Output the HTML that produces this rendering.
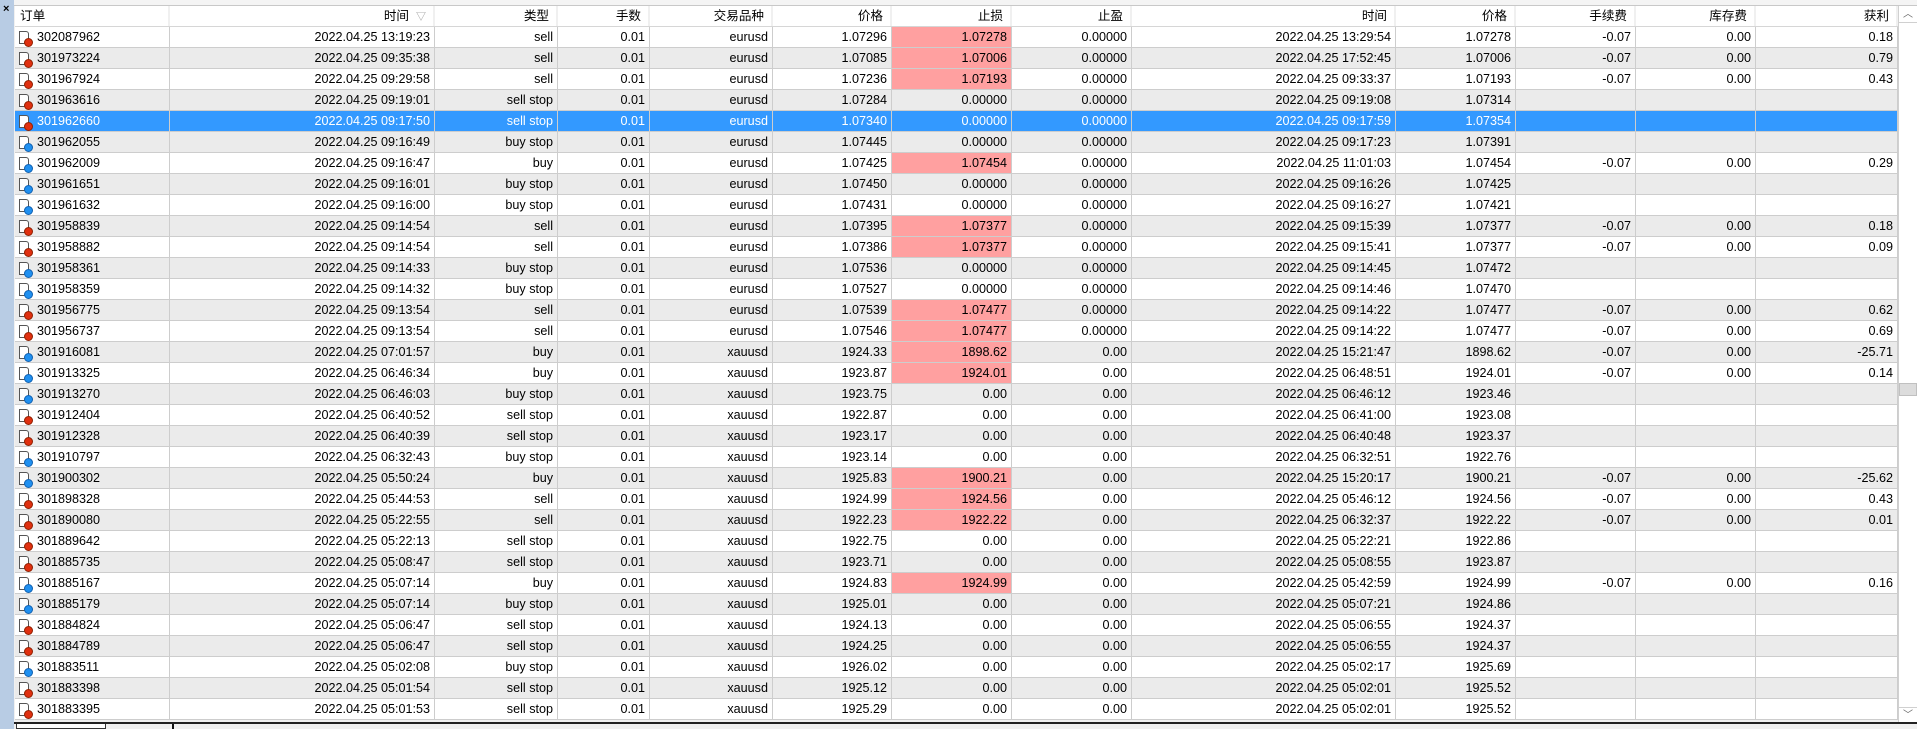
<!DOCTYPE html>
<html><head><meta charset="utf-8"><style>
*{margin:0;padding:0;box-sizing:border-box}
body{width:1917px;height:729px;overflow:hidden;background:#f0f0f0;font-family:"Liberation Sans","Noto Sans CJK SC",sans-serif;font-size:12.6px;color:#000;position:relative}
#strip{position:absolute;left:0;top:0;width:14px;height:729px;background:#b8cce4}
#x{position:absolute;left:3px;top:4px;font-size:11px;font-weight:bold;line-height:10px}
#topbar{position:absolute;left:14px;top:0;width:1903px;height:6px;background:#f4f4f4;border-bottom:1px solid #c8c8c8}
#hdr{position:absolute;left:15px;top:6px;height:21px;display:flex;background:#fff;border-bottom:1px solid #d6d6d6}
#hdr div{height:20px;line-height:20px;text-align:right;padding-right:7px;border-right:2px solid #f0f0f0;background:#fff}
#hdr div:first-child{text-align:left;padding-left:5px}
#rows{position:absolute;left:15px;top:27px}
.r{display:flex;height:21px;background:#fff}
.r:nth-child(even){background:#ebebeb}
.r>div{height:21px;line-height:20px;border-right:1px solid #cdcdcd;border-bottom:1px solid #cdcdcd;text-align:right;padding-right:4px;white-space:nowrap;overflow:hidden}
.r>div:first-child{text-align:left;padding-left:22px;position:relative}
.r.sel{background:#3399ff!important;color:#fff}
.sl{background:#ffa0a0}
.ic{position:absolute;left:4px;top:4px;width:10px;height:13px;border:1px solid #555;background:#fff;border-radius:0 3px 0 0}
.ic::after{content:"";position:absolute;left:4px;top:6px;width:7px;height:7px;border-radius:50%;background:#e03010;border:1px solid #902000}
.ic.b::after{background:#2090f0;border-color:#1060b0}
.c0{width:155px}.c1{width:265px}.c2{width:123px}.c3{width:92px}.c4{width:123px}.c5{width:119px}.c6{width:120px}.c7{width:120px}.c8{width:264px}.c9{width:120px}.c10{width:120px}.c11{width:120px}.c12{width:142px}
#sb{position:absolute;left:1898px;top:6px;width:19px;height:717px;background:#fff;border-left:1px solid #d0d0d0}
#up,#dn{position:absolute;left:0;width:18px;height:16px;font-size:10px;color:#666;text-align:center;line-height:16px}
#up{top:1px;border-bottom:1px solid #d0d0d0}
#dn{bottom:0;border-top:1px solid #d0d0d0}
#th{position:absolute;left:0;top:377px;width:18px;height:13px;background:#dcdcdc;border:1px solid #c0c0c0}
#bot{position:absolute;left:14px;top:722px;width:1903px;height:7px;background:#f0f0f0;border-top:2px solid #222}
#tab1{position:absolute;left:16px;top:724px;width:90px;height:5px;background:#fff;border:1px solid #333;border-top:none}
#tab2{position:absolute;left:172px;top:724px;width:1700px;height:5px;border-left:2px solid #111}
</style></head><body>
<div id="strip"><div id="x">×</div></div>
<div id="topbar"></div>
<div id="hdr">
<div class="c0">订单</div><div class="c1">时间 &nbsp;<span style="color:#999;font-size:10px">▽</span></div><div class="c2">类型</div><div class="c3">手数</div><div class="c4">交易品种</div><div class="c5">价格</div><div class="c6">止损</div><div class="c7">止盈</div><div class="c8">时间</div><div class="c9">价格</div><div class="c10">手续费</div><div class="c11">库存费</div><div class="c12">获利</div>
</div>
<div id="rows">
<div class="r"><div class="c0"><span class="ic"></span>302087962</div><div class="c1">2022.04.25 13:19:23</div><div class="c2">sell</div><div class="c3">0.01</div><div class="c4">eurusd</div><div class="c5">1.07296</div><div class="c6 sl">1.07278</div><div class="c7">0.00000</div><div class="c8">2022.04.25 13:29:54</div><div class="c9">1.07278</div><div class="c10">-0.07</div><div class="c11">0.00</div><div class="c12">0.18</div></div>
<div class="r"><div class="c0"><span class="ic"></span>301973224</div><div class="c1">2022.04.25 09:35:38</div><div class="c2">sell</div><div class="c3">0.01</div><div class="c4">eurusd</div><div class="c5">1.07085</div><div class="c6 sl">1.07006</div><div class="c7">0.00000</div><div class="c8">2022.04.25 17:52:45</div><div class="c9">1.07006</div><div class="c10">-0.07</div><div class="c11">0.00</div><div class="c12">0.79</div></div>
<div class="r"><div class="c0"><span class="ic"></span>301967924</div><div class="c1">2022.04.25 09:29:58</div><div class="c2">sell</div><div class="c3">0.01</div><div class="c4">eurusd</div><div class="c5">1.07236</div><div class="c6 sl">1.07193</div><div class="c7">0.00000</div><div class="c8">2022.04.25 09:33:37</div><div class="c9">1.07193</div><div class="c10">-0.07</div><div class="c11">0.00</div><div class="c12">0.43</div></div>
<div class="r"><div class="c0"><span class="ic"></span>301963616</div><div class="c1">2022.04.25 09:19:01</div><div class="c2">sell stop</div><div class="c3">0.01</div><div class="c4">eurusd</div><div class="c5">1.07284</div><div class="c6">0.00000</div><div class="c7">0.00000</div><div class="c8">2022.04.25 09:19:08</div><div class="c9">1.07314</div><div class="c10"></div><div class="c11"></div><div class="c12"></div></div>
<div class="r sel"><div class="c0"><span class="ic"></span>301962660</div><div class="c1">2022.04.25 09:17:50</div><div class="c2">sell stop</div><div class="c3">0.01</div><div class="c4">eurusd</div><div class="c5">1.07340</div><div class="c6">0.00000</div><div class="c7">0.00000</div><div class="c8">2022.04.25 09:17:59</div><div class="c9">1.07354</div><div class="c10"></div><div class="c11"></div><div class="c12"></div></div>
<div class="r"><div class="c0"><span class="ic b"></span>301962055</div><div class="c1">2022.04.25 09:16:49</div><div class="c2">buy stop</div><div class="c3">0.01</div><div class="c4">eurusd</div><div class="c5">1.07445</div><div class="c6">0.00000</div><div class="c7">0.00000</div><div class="c8">2022.04.25 09:17:23</div><div class="c9">1.07391</div><div class="c10"></div><div class="c11"></div><div class="c12"></div></div>
<div class="r"><div class="c0"><span class="ic b"></span>301962009</div><div class="c1">2022.04.25 09:16:47</div><div class="c2">buy</div><div class="c3">0.01</div><div class="c4">eurusd</div><div class="c5">1.07425</div><div class="c6 sl">1.07454</div><div class="c7">0.00000</div><div class="c8">2022.04.25 11:01:03</div><div class="c9">1.07454</div><div class="c10">-0.07</div><div class="c11">0.00</div><div class="c12">0.29</div></div>
<div class="r"><div class="c0"><span class="ic b"></span>301961651</div><div class="c1">2022.04.25 09:16:01</div><div class="c2">buy stop</div><div class="c3">0.01</div><div class="c4">eurusd</div><div class="c5">1.07450</div><div class="c6">0.00000</div><div class="c7">0.00000</div><div class="c8">2022.04.25 09:16:26</div><div class="c9">1.07425</div><div class="c10"></div><div class="c11"></div><div class="c12"></div></div>
<div class="r"><div class="c0"><span class="ic b"></span>301961632</div><div class="c1">2022.04.25 09:16:00</div><div class="c2">buy stop</div><div class="c3">0.01</div><div class="c4">eurusd</div><div class="c5">1.07431</div><div class="c6">0.00000</div><div class="c7">0.00000</div><div class="c8">2022.04.25 09:16:27</div><div class="c9">1.07421</div><div class="c10"></div><div class="c11"></div><div class="c12"></div></div>
<div class="r"><div class="c0"><span class="ic"></span>301958839</div><div class="c1">2022.04.25 09:14:54</div><div class="c2">sell</div><div class="c3">0.01</div><div class="c4">eurusd</div><div class="c5">1.07395</div><div class="c6 sl">1.07377</div><div class="c7">0.00000</div><div class="c8">2022.04.25 09:15:39</div><div class="c9">1.07377</div><div class="c10">-0.07</div><div class="c11">0.00</div><div class="c12">0.18</div></div>
<div class="r"><div class="c0"><span class="ic"></span>301958882</div><div class="c1">2022.04.25 09:14:54</div><div class="c2">sell</div><div class="c3">0.01</div><div class="c4">eurusd</div><div class="c5">1.07386</div><div class="c6 sl">1.07377</div><div class="c7">0.00000</div><div class="c8">2022.04.25 09:15:41</div><div class="c9">1.07377</div><div class="c10">-0.07</div><div class="c11">0.00</div><div class="c12">0.09</div></div>
<div class="r"><div class="c0"><span class="ic b"></span>301958361</div><div class="c1">2022.04.25 09:14:33</div><div class="c2">buy stop</div><div class="c3">0.01</div><div class="c4">eurusd</div><div class="c5">1.07536</div><div class="c6">0.00000</div><div class="c7">0.00000</div><div class="c8">2022.04.25 09:14:45</div><div class="c9">1.07472</div><div class="c10"></div><div class="c11"></div><div class="c12"></div></div>
<div class="r"><div class="c0"><span class="ic b"></span>301958359</div><div class="c1">2022.04.25 09:14:32</div><div class="c2">buy stop</div><div class="c3">0.01</div><div class="c4">eurusd</div><div class="c5">1.07527</div><div class="c6">0.00000</div><div class="c7">0.00000</div><div class="c8">2022.04.25 09:14:46</div><div class="c9">1.07470</div><div class="c10"></div><div class="c11"></div><div class="c12"></div></div>
<div class="r"><div class="c0"><span class="ic"></span>301956775</div><div class="c1">2022.04.25 09:13:54</div><div class="c2">sell</div><div class="c3">0.01</div><div class="c4">eurusd</div><div class="c5">1.07539</div><div class="c6 sl">1.07477</div><div class="c7">0.00000</div><div class="c8">2022.04.25 09:14:22</div><div class="c9">1.07477</div><div class="c10">-0.07</div><div class="c11">0.00</div><div class="c12">0.62</div></div>
<div class="r"><div class="c0"><span class="ic"></span>301956737</div><div class="c1">2022.04.25 09:13:54</div><div class="c2">sell</div><div class="c3">0.01</div><div class="c4">eurusd</div><div class="c5">1.07546</div><div class="c6 sl">1.07477</div><div class="c7">0.00000</div><div class="c8">2022.04.25 09:14:22</div><div class="c9">1.07477</div><div class="c10">-0.07</div><div class="c11">0.00</div><div class="c12">0.69</div></div>
<div class="r"><div class="c0"><span class="ic b"></span>301916081</div><div class="c1">2022.04.25 07:01:57</div><div class="c2">buy</div><div class="c3">0.01</div><div class="c4">xauusd</div><div class="c5">1924.33</div><div class="c6 sl">1898.62</div><div class="c7">0.00</div><div class="c8">2022.04.25 15:21:47</div><div class="c9">1898.62</div><div class="c10">-0.07</div><div class="c11">0.00</div><div class="c12">-25.71</div></div>
<div class="r"><div class="c0"><span class="ic b"></span>301913325</div><div class="c1">2022.04.25 06:46:34</div><div class="c2">buy</div><div class="c3">0.01</div><div class="c4">xauusd</div><div class="c5">1923.87</div><div class="c6 sl">1924.01</div><div class="c7">0.00</div><div class="c8">2022.04.25 06:48:51</div><div class="c9">1924.01</div><div class="c10">-0.07</div><div class="c11">0.00</div><div class="c12">0.14</div></div>
<div class="r"><div class="c0"><span class="ic b"></span>301913270</div><div class="c1">2022.04.25 06:46:03</div><div class="c2">buy stop</div><div class="c3">0.01</div><div class="c4">xauusd</div><div class="c5">1923.75</div><div class="c6">0.00</div><div class="c7">0.00</div><div class="c8">2022.04.25 06:46:12</div><div class="c9">1923.46</div><div class="c10"></div><div class="c11"></div><div class="c12"></div></div>
<div class="r"><div class="c0"><span class="ic"></span>301912404</div><div class="c1">2022.04.25 06:40:52</div><div class="c2">sell stop</div><div class="c3">0.01</div><div class="c4">xauusd</div><div class="c5">1922.87</div><div class="c6">0.00</div><div class="c7">0.00</div><div class="c8">2022.04.25 06:41:00</div><div class="c9">1923.08</div><div class="c10"></div><div class="c11"></div><div class="c12"></div></div>
<div class="r"><div class="c0"><span class="ic"></span>301912328</div><div class="c1">2022.04.25 06:40:39</div><div class="c2">sell stop</div><div class="c3">0.01</div><div class="c4">xauusd</div><div class="c5">1923.17</div><div class="c6">0.00</div><div class="c7">0.00</div><div class="c8">2022.04.25 06:40:48</div><div class="c9">1923.37</div><div class="c10"></div><div class="c11"></div><div class="c12"></div></div>
<div class="r"><div class="c0"><span class="ic b"></span>301910797</div><div class="c1">2022.04.25 06:32:43</div><div class="c2">buy stop</div><div class="c3">0.01</div><div class="c4">xauusd</div><div class="c5">1923.14</div><div class="c6">0.00</div><div class="c7">0.00</div><div class="c8">2022.04.25 06:32:51</div><div class="c9">1922.76</div><div class="c10"></div><div class="c11"></div><div class="c12"></div></div>
<div class="r"><div class="c0"><span class="ic b"></span>301900302</div><div class="c1">2022.04.25 05:50:24</div><div class="c2">buy</div><div class="c3">0.01</div><div class="c4">xauusd</div><div class="c5">1925.83</div><div class="c6 sl">1900.21</div><div class="c7">0.00</div><div class="c8">2022.04.25 15:20:17</div><div class="c9">1900.21</div><div class="c10">-0.07</div><div class="c11">0.00</div><div class="c12">-25.62</div></div>
<div class="r"><div class="c0"><span class="ic"></span>301898328</div><div class="c1">2022.04.25 05:44:53</div><div class="c2">sell</div><div class="c3">0.01</div><div class="c4">xauusd</div><div class="c5">1924.99</div><div class="c6 sl">1924.56</div><div class="c7">0.00</div><div class="c8">2022.04.25 05:46:12</div><div class="c9">1924.56</div><div class="c10">-0.07</div><div class="c11">0.00</div><div class="c12">0.43</div></div>
<div class="r"><div class="c0"><span class="ic"></span>301890080</div><div class="c1">2022.04.25 05:22:55</div><div class="c2">sell</div><div class="c3">0.01</div><div class="c4">xauusd</div><div class="c5">1922.23</div><div class="c6 sl">1922.22</div><div class="c7">0.00</div><div class="c8">2022.04.25 06:32:37</div><div class="c9">1922.22</div><div class="c10">-0.07</div><div class="c11">0.00</div><div class="c12">0.01</div></div>
<div class="r"><div class="c0"><span class="ic"></span>301889642</div><div class="c1">2022.04.25 05:22:13</div><div class="c2">sell stop</div><div class="c3">0.01</div><div class="c4">xauusd</div><div class="c5">1922.75</div><div class="c6">0.00</div><div class="c7">0.00</div><div class="c8">2022.04.25 05:22:21</div><div class="c9">1922.86</div><div class="c10"></div><div class="c11"></div><div class="c12"></div></div>
<div class="r"><div class="c0"><span class="ic"></span>301885735</div><div class="c1">2022.04.25 05:08:47</div><div class="c2">sell stop</div><div class="c3">0.01</div><div class="c4">xauusd</div><div class="c5">1923.71</div><div class="c6">0.00</div><div class="c7">0.00</div><div class="c8">2022.04.25 05:08:55</div><div class="c9">1923.87</div><div class="c10"></div><div class="c11"></div><div class="c12"></div></div>
<div class="r"><div class="c0"><span class="ic b"></span>301885167</div><div class="c1">2022.04.25 05:07:14</div><div class="c2">buy</div><div class="c3">0.01</div><div class="c4">xauusd</div><div class="c5">1924.83</div><div class="c6 sl">1924.99</div><div class="c7">0.00</div><div class="c8">2022.04.25 05:42:59</div><div class="c9">1924.99</div><div class="c10">-0.07</div><div class="c11">0.00</div><div class="c12">0.16</div></div>
<div class="r"><div class="c0"><span class="ic b"></span>301885179</div><div class="c1">2022.04.25 05:07:14</div><div class="c2">buy stop</div><div class="c3">0.01</div><div class="c4">xauusd</div><div class="c5">1925.01</div><div class="c6">0.00</div><div class="c7">0.00</div><div class="c8">2022.04.25 05:07:21</div><div class="c9">1924.86</div><div class="c10"></div><div class="c11"></div><div class="c12"></div></div>
<div class="r"><div class="c0"><span class="ic"></span>301884824</div><div class="c1">2022.04.25 05:06:47</div><div class="c2">sell stop</div><div class="c3">0.01</div><div class="c4">xauusd</div><div class="c5">1924.13</div><div class="c6">0.00</div><div class="c7">0.00</div><div class="c8">2022.04.25 05:06:55</div><div class="c9">1924.37</div><div class="c10"></div><div class="c11"></div><div class="c12"></div></div>
<div class="r"><div class="c0"><span class="ic"></span>301884789</div><div class="c1">2022.04.25 05:06:47</div><div class="c2">sell stop</div><div class="c3">0.01</div><div class="c4">xauusd</div><div class="c5">1924.25</div><div class="c6">0.00</div><div class="c7">0.00</div><div class="c8">2022.04.25 05:06:55</div><div class="c9">1924.37</div><div class="c10"></div><div class="c11"></div><div class="c12"></div></div>
<div class="r"><div class="c0"><span class="ic b"></span>301883511</div><div class="c1">2022.04.25 05:02:08</div><div class="c2">buy stop</div><div class="c3">0.01</div><div class="c4">xauusd</div><div class="c5">1926.02</div><div class="c6">0.00</div><div class="c7">0.00</div><div class="c8">2022.04.25 05:02:17</div><div class="c9">1925.69</div><div class="c10"></div><div class="c11"></div><div class="c12"></div></div>
<div class="r"><div class="c0"><span class="ic"></span>301883398</div><div class="c1">2022.04.25 05:01:54</div><div class="c2">sell stop</div><div class="c3">0.01</div><div class="c4">xauusd</div><div class="c5">1925.12</div><div class="c6">0.00</div><div class="c7">0.00</div><div class="c8">2022.04.25 05:02:01</div><div class="c9">1925.52</div><div class="c10"></div><div class="c11"></div><div class="c12"></div></div>
<div class="r"><div class="c0"><span class="ic"></span>301883395</div><div class="c1">2022.04.25 05:01:53</div><div class="c2">sell stop</div><div class="c3">0.01</div><div class="c4">xauusd</div><div class="c5">1925.29</div><div class="c6">0.00</div><div class="c7">0.00</div><div class="c8">2022.04.25 05:02:01</div><div class="c9">1925.52</div><div class="c10"></div><div class="c11"></div><div class="c12"></div></div>
</div>
<div id="sb"><div id="up">︿</div><div id="th"></div><div id="dn">﹀</div></div>
<div id="bot"></div>
<div id="tab1"></div>
<div id="tab2"></div>
</body></html>
